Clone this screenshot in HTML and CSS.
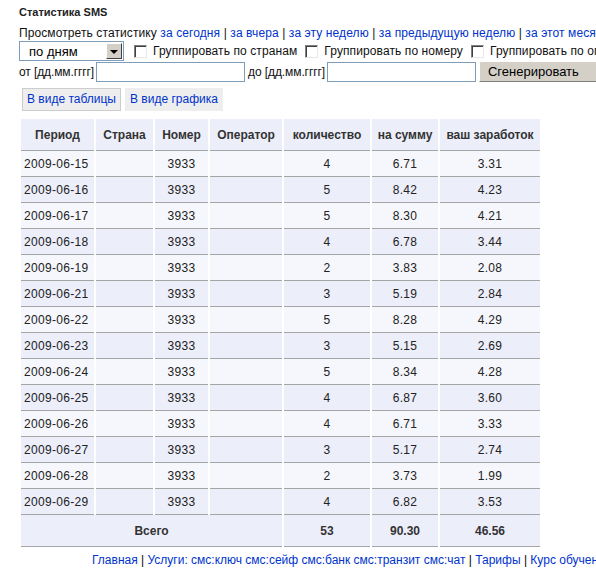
FILE: index.html
```html
<!DOCTYPE html>
<html>
<head>
<meta charset="utf-8">
<link rel="stylesheet" href="styles.css">
</head>
<body>
<div class="page">
  <div class="title">Статистика SMS</div>
  <div class="periods">Просмотреть статистику <a href="#">за сегодня</a> | <a href="#">за вчера</a> | <a href="#">за эту неделю</a> | <a href="#">за предыдущую неделю</a> | <a href="#">за этот месяц</a> | <a href="#">за прошлый месяц</a></div>
  <div class="row">
    <div class="select"><span class="sel-text">по дням</span><span class="sel-btn"><span class="arrow"></span></span></div>
    <span class="cb"></span><span class="cb-label">Группировать по странам</span>
    <span class="cb"></span><span class="cb-label">Группировать по номеру</span>
    <span class="cb"></span><span class="cb-label">Группировать по операторам</span>
  </div>
  <div class="row row2">
    <span class="lbl">от [дд.мм.гггг]</span><input type="text" class="txt">
    <span class="lbl">до [дд.мм.гггг]</span><input type="text" class="txt">
    <button class="btn">Сгенерировать</button>
  </div>
  <div class="tabs">
    <a href="#" class="tab active">В виде таблицы</a>
    <a href="#" class="tab">В виде графика</a>
  </div>
  <table class="stats">
    <colgroup>
      <col class="c1"><col class="c2"><col class="c3"><col class="c4"><col class="c5"><col class="c6"><col class="c7">
    </colgroup>
    <thead>
      <tr><th>Период</th><th>Страна</th><th>Номер</th><th>Оператор</th><th>количество</th><th>на сумму</th><th>ваш заработок</th></tr>
    </thead>
    <tbody>
      <tr class="odd"><td class="date">2009-06-15</td><td></td><td>3933</td><td></td><td>4</td><td>6.71</td><td>3.31</td></tr>
      <tr class="even"><td class="date">2009-06-16</td><td></td><td>3933</td><td></td><td>5</td><td>8.42</td><td>4.23</td></tr>
      <tr class="odd"><td class="date">2009-06-17</td><td></td><td>3933</td><td></td><td>5</td><td>8.30</td><td>4.21</td></tr>
      <tr class="even"><td class="date">2009-06-18</td><td></td><td>3933</td><td></td><td>4</td><td>6.78</td><td>3.44</td></tr>
      <tr class="odd"><td class="date">2009-06-19</td><td></td><td>3933</td><td></td><td>2</td><td>3.83</td><td>2.08</td></tr>
      <tr class="even"><td class="date">2009-06-21</td><td></td><td>3933</td><td></td><td>3</td><td>5.19</td><td>2.84</td></tr>
      <tr class="odd"><td class="date">2009-06-22</td><td></td><td>3933</td><td></td><td>5</td><td>8.28</td><td>4.29</td></tr>
      <tr class="even"><td class="date">2009-06-23</td><td></td><td>3933</td><td></td><td>3</td><td>5.15</td><td>2.69</td></tr>
      <tr class="odd"><td class="date">2009-06-24</td><td></td><td>3933</td><td></td><td>5</td><td>8.34</td><td>4.28</td></tr>
      <tr class="even"><td class="date">2009-06-25</td><td></td><td>3933</td><td></td><td>4</td><td>6.87</td><td>3.60</td></tr>
      <tr class="odd"><td class="date">2009-06-26</td><td></td><td>3933</td><td></td><td>4</td><td>6.71</td><td>3.33</td></tr>
      <tr class="even"><td class="date">2009-06-27</td><td></td><td>3933</td><td></td><td>3</td><td>5.17</td><td>2.74</td></tr>
      <tr class="odd"><td class="date">2009-06-28</td><td></td><td>3933</td><td></td><td>2</td><td>3.73</td><td>1.99</td></tr>
      <tr class="even"><td class="date">2009-06-29</td><td></td><td>3933</td><td></td><td>4</td><td>6.82</td><td>3.53</td></tr>
    </tbody>
    <tfoot>
      <tr><th colspan="4">Всего</th><th>53</th><th>90.30</th><th>46.56</th></tr>
    </tfoot>
  </table>
  <div class="footer"><a href="#">Главная</a> | <a href="#">Услуги: смс:ключ смс:сейф смс:банк смс:транзит смс:чат</a> | <a href="#">Тарифы</a> | <a href="#">Курс обучения</a></div>
</div>
</body>
</html>
```
FILE: styles.css
```css
html { overflow: hidden; }
body {
  margin: 0;
  background: #fff;
  font-family: "Liberation Sans", Arial, sans-serif;
  font-size: 12px;
  color: #000;
}
.page {
  padding: 5px 0 0 19px;
  white-space: nowrap;
}
a { color: #0033cc; text-decoration: none; }
.title {
  font-weight: bold;
  font-size: 11px;
  color: #222;
  line-height: 14px;
  height: 21px;
}
.periods {
  line-height: 14px;
  height: 15px;
  letter-spacing: 0.1px;
  color: #111;
}
.row {
  display: flex;
  align-items: center;
  height: 20px;
}
.row > * { flex-shrink: 0; }
.select {
  box-sizing: border-box;
  width: 105px;
  height: 20px;
  border: 1px solid #7f9db9;
  display: flex;
  align-items: center;
  justify-content: space-between;
  padding: 1px;
  background: #fff;
}
.sel-text {
  padding-left: 8px;
  font-size: 13px;
}
.sel-btn {
  box-sizing: border-box;
  width: 16px;
  height: 16px;
  background: #d4d0c8;
  border: 1px solid;
  border-color: #fff #404040 #404040 #fff;
  display: flex;
  align-items: center;
  justify-content: center;
}
.arrow {
  width: 0;
  height: 0;
  border-left: 4px solid transparent;
  border-right: 4px solid transparent;
  border-top: 4px solid #000;
  margin-top: 1px;
}
.cb {
  display: block;
  box-sizing: border-box;
  width: 13px;
  height: 13px;
  margin: 0 6px 0 10px;
  background: #fff;
  border: 1px solid;
  border-color: #808080 #e8e8e8 #e8e8e8 #808080;
  box-shadow: inset 1px 1px 0 #404040;
}
.cb-label { font-size: 12px; color: #111; letter-spacing: 0.1px; }
.cb-label + .cb { margin-left: 8px; }
.row2 { height: 21px; }
.lbl { color: #111; letter-spacing: -0.1px; }
.txt {
  box-sizing: border-box;
  width: 149px;
  height: 20px;
  margin: 0 3px 0 2px;
  border: 1px solid #7f9db9;
  padding: 0;
  font: inherit;
}
.btn {
  box-sizing: border-box;
  height: 21px;
  padding: 0 8px;
  background: #d4d0c8;
  border: 1px solid;
  border-color: #fff #808080 #808080 #fff;
  font-family: "Liberation Sans", Arial, sans-serif;
  font-size: 13px;
  color: #000;
  min-width: 120px;
  text-align: left;
}
.tabs {
  display: flex;
  gap: 4px;
  margin: 6px 0 0 3px;
  height: 23px;
}
.tab {
  box-sizing: border-box;
  height: 23px;
  line-height: 21px;
  padding: 0 4px;
  background: #eeeeee;
  border: 1px solid #eeeeee;
  font-size: 12px;
}
.tab.active { border-color: #cccccc; }
.stats {
  margin-top: 8px;
  border-collapse: separate;
  border-spacing: 2px 0;
  table-layout: fixed;
  width: 523px;
  font-size: 12px;
  color: #222;
}
.c1 { width: 73px; }
.c2 { width: 57px; }
.c3 { width: 53px; }
.c4 { width: 72px; }
.c5 { width: 86px; }
.c6 { width: 66px; }
.c7 { width: 100px; }
.stats th, .stats td {
  padding: 0;
  text-align: center;
  border-bottom: 1px solid #a5a5a5;
}
.stats th {
  height: 31px;
  background: #eceefa;
  font-weight: bold;
  color: #333;
}
.stats td { height: 25px; letter-spacing: 0.3px; }
.stats td.date { text-align: left; padding-left: 3px; }
.stats tr.odd td { background: #f6f7fc; }
.stats tr.even td { background: #eceefa; }
.footer {
  padding-left: 73px;
  margin-top: 6px;
  line-height: 14px;
}
```
